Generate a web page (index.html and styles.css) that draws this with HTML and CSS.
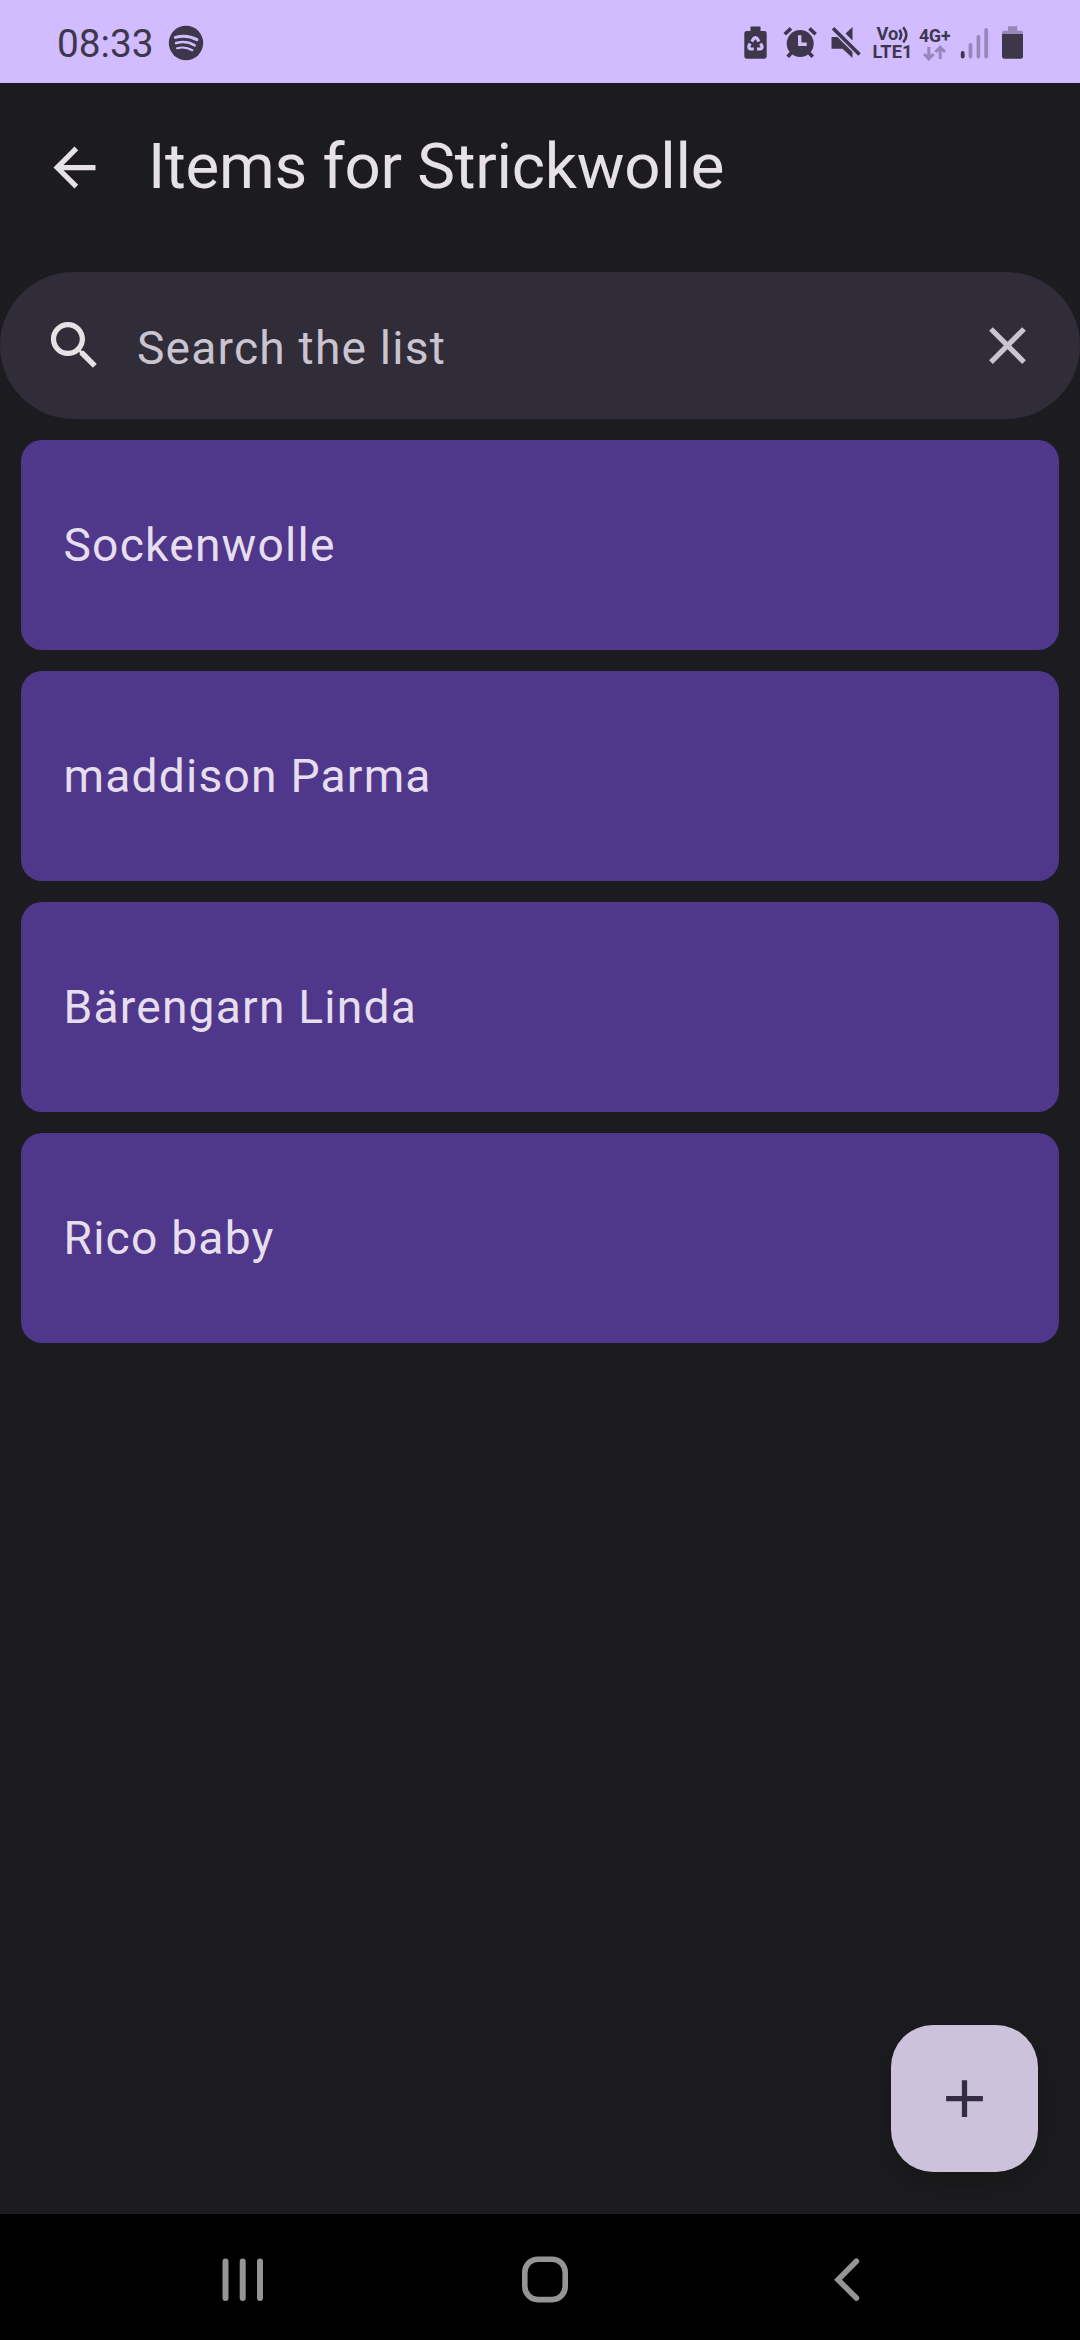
FILE: index.html
```html
<!DOCTYPE html>
<html lang="en">
<head>
<meta charset="utf-8">
<title>Items for Strickwolle</title>
<link rel="stylesheet" href="styles.css">
</head>
<body>
<div class="screen">
  <header class="status-bar">
    <div class="status-left">
      <span class="clock">08:33</span>
      <svg class="spotify" width="36" height="36" viewBox="0 0 36 36">
        <circle cx="18" cy="18" r="17.2" fill="#3e374c"/>
        <g fill="none" stroke="#d0bcff" stroke-linecap="round">
          <path d="M7.3 12.4c7.2-2.1 15.4-1.2 21.6 2.2" stroke-width="3"/>
          <path d="M8.2 18.1c6.4-1.9 13.2-1 18.5 2.2" stroke-width="2.6"/>
          <path d="M9.1 23.3c5.300-1.500 10.700-.8 15.200 1.900" stroke-width="2.2"/>
        </g>
      </svg>
    </div>
    <div class="status-right">
      <svg width="40" height="83" viewBox="738 0 40 83">
        <path d="M750.5 26.5h10v4.5h3.7a2.5 2.5 0 0 1 2.5 2.5v22.5a2.7 2.7 0 0 1-2.7 2.7h-17a2.7 2.7 0 0 1-2.7-2.7v-22.5a2.5 2.5 0 0 1 2.5-2.5h3.7z" fill="#3e374c"/>
        <g fill="none" stroke="#d0bcff" stroke-width="3.2" stroke-linejoin="round">
          <path d="M751.800 41.500l1.700-2.700q1.900-2.500 3.800 0l1.700 2.700"/>
          <path d="M760.600 43.600l1.200 2.200q.9 3-2.100 3.200h-2.700"/>
          <path d="M753.800 49h-2.700q-3-.2-2.100-3.200l1.200-2.200"/>
        </g>
      </svg>
      <svg width="46" height="83" viewBox="778 0 46 83" fill="none" stroke="#3e374c">
        <circle cx="800.2" cy="43.5" r="13.5" fill="#3e374c" stroke="none"/>
        <path d="M784.7 34.3l6.3-5.9M815.7 34.3l-6.3-5.9" stroke-width="3.6"/>
        <path d="M793 51l-5.300 5.700M807.400 51l5.300 5.700" stroke-width="3.6"/>
        <path d="M799.700 35.300v9h7" stroke="#d0bcff" stroke-width="3.4"/>
      </svg>
      <svg width="44" height="83" viewBox="824 0 44 83" fill="#3e374c">
        <path d="M852.500 27v13.500l-7-7zM832 37h8l12.500 12.500v8.500l-10-9.300h-10.500q-.5 0-.5-.5v-10.700q0-.5.5-.5z"/>
        <path d="M833.200 28.500l26 25.800" fill="none" stroke="#d0bcff" stroke-width="6"/>
        <path d="M833 28.300l26.500 26.200" fill="none" stroke="#3e374c" stroke-width="3.6"/>
      </svg>
      <svg class="net-text" width="48" height="83" viewBox="868 0 48 83" fill="#3e374c">
        <text x="876.500" y="40.300" textLength="21.800" lengthAdjust="spacingAndGlyphs">Vo</text>
        <path d="M899.300 29.800q3.700 5 0 10M903.200 27.200q6.300 7.600 0 15.200" fill="none" stroke="#3e374c" stroke-width="2.5"/>
        <text x="872.500" y="58.200" textLength="40" lengthAdjust="spacingAndGlyphs">LTE1</text>
      </svg>
      <svg class="net-text" width="40" height="83" viewBox="916 0 40 83" fill="#3e374c">
        <text x="919" y="41.500" textLength="31.700" lengthAdjust="spacingAndGlyphs">4G+</text>
        <path d="M928.800 47v11.500M924 54l4.800 4.800 4.800-4.800M940.200 59v-11.500M935.400 52l4.800-4.800 4.800 4.800" fill="none" stroke="#9787bb" stroke-width="3"/>
      </svg>
      <svg width="38" height="83" viewBox="956 0 38 83">
        <rect x="960.800" y="51" width="3.800" height="7.500" rx="1.900" fill="#3e374c"/>
        <g fill="#9787bb">
          <rect x="968.600" y="43" width="3.800" height="15.500" rx="1.900"/>
          <rect x="976.500" y="35" width="3.800" height="23.500" rx="1.900"/>
          <rect x="984.300" y="28" width="3.800" height="30.500" rx="1.900"/>
        </g>
      </svg>
      <svg width="36" height="83" viewBox="994 0 36 83">
        <path d="M1008 26.200h9.300v4.600h3.700a2 2 0 0 1 2 2v1.200h-21v-1.200a2 2 0 0 1 2-2h4z" fill="#9787bb"/>
        <path d="M1002 34h21v22.500a2.300 2.300 0 0 1-2.300 2.300h-16.400a2.300 2.300 0 0 1-2.300-2.300z" fill="#3e374c"/>
      </svg>
    </div>
  </header>

  <div class="app-bar">
    <svg class="icon" viewBox="0 0 24 24"><path d="M20 11H7.830l5.590-5.590L12 4l-8 8 8 8 1.410-1.410L7.830 13H20v-2z"/></svg>
    <h1 class="title">Items for Strickwolle</h1>
  </div>

  <main class="content">
    <div class="search">
      <svg class="icon" viewBox="0 0 24 24"><path d="M15.500 14h-.79l-.28-.27C15.410 12.590 16 11.110 16 9.500 16 5.910 13.090 3 9.500 3S3 5.910 3 9.500 5.910 16 9.500 16c1.610 0 3.090-.59 4.230-1.570l.27.28v.79l5 4.990L20.490 19l-4.990-5zm-6 0C7.010 14 5 11.990 5 9.500S7.010 5 9.500 5 14 7.010 14 9.500 11.990 14 9.500 14z"/></svg>
      <span class="placeholder">Search the list</span>
      <svg class="icon icon-clear" viewBox="0 0 24 24"><path d="M19 6.410L17.590 5 12 10.590 6.410 5 5 6.410 10.590 12 5 17.590 6.410 19 12 13.410 17.590 19 19 17.590 13.410 12z"/></svg>
    </div>
    <ul class="list">
      <li class="card">Sockenwolle</li>
      <li class="card">maddison Parma</li>
      <li class="card">Bärengarn Linda</li>
      <li class="card">Rico baby</li>
    </ul>
    <button class="fab" aria-label="Add">
      <svg class="icon icon-add" viewBox="0 0 24 24"><path d="M19 13h-6v6h-2v-6H5v-2h6V5h2v6h6v2z"/></svg>
    </button>
  </main>

  <nav class="nav-bar">
    <svg width="46" height="50" viewBox="0 0 46 50" fill="none" stroke="#959595" stroke-width="6" stroke-linecap="round">
      <path d="M5.500 7.500v36.500M22.700 7.500v36.500M40 7.500v36.500"/>
    </svg>
    <svg width="50" height="50" viewBox="0 0 50 50" fill="none" stroke="#959595" stroke-width="5.6">
      <rect x="4.800" y="5.200" width="40.400" height="40.400" rx="13"/>
    </svg>
    <svg width="46" height="50" viewBox="0 0 46 50" fill="none" stroke="#959595" stroke-width="5.6" stroke-linecap="round">
      <path d="M33.400 7.300L15 25.700l18.400 18.400"/>
    </svg>
  </nav>
</div>
</body>
</html>
```

FILE: styles.css
```css
* {
  box-sizing: border-box;
}

body {
  margin: 0;
  font-family: Roboto, "Noto Sans", sans-serif;
  background: #1c1b1f;
}

.screen {
  display: flex;
  flex-direction: column;
  width: 1080px;
  height: 2340px;
  overflow: hidden;
  color: #e6e1e5;
}

.status-bar {
  display: flex;
  justify-content: space-between;
  height: 83px;
  padding: 0 50px 0 57px;
  background: #d0bcff;
}

.status-left {
  display: flex;
  align-items: center;
  gap: 14px;
  color: #3e374c;
}

.clock {
  font-size: 38.8px;
  line-height: 46px;
  padding-top: 5px;
}

.spotify {
  margin-top: 2px;
}

.status-right {
  display: flex;
}

.net-text {
  font-size: 18px;
  font-weight: 700;
}

.app-bar {
  display: flex;
  align-items: center;
  gap: 42px;
  height: 168px;
  padding-left: 43px;
}

.title {
  margin: 0;
  font-size: 63.5px;
  font-weight: 400;
  line-height: 74px;
  letter-spacing: -0.22px;
}

.icon {
  flex: none;
  width: 63px;
  height: 63px;
  fill: #e6e1e5;
}

.content {
  position: relative;
  flex: 1;
  padding-top: 21px;
}

.search {
  display: flex;
  align-items: center;
  height: 147px;
  padding: 0 41px 0 43px;
  border-radius: 74px;
  background: #302d38;
}

.placeholder {
  flex: 1;
  padding: 5px 0 0 31px;
  font-size: 46.2px;
  letter-spacing: 1.18px;
  line-height: 56px;
  color: #cac4d0;
}

.icon-clear {
  fill: #cac4d0;
}

.list {
  display: flex;
  flex-direction: column;
  gap: 21px;
  margin: 0;
  padding: 21px;
  list-style: none;
}

.card {
  display: flex;
  align-items: center;
  height: 210px;
  padding-left: 42.5px;
  border-radius: 21px;
  background: #4f378b;
  color: #e6deed;
  font-size: 46.2px;
  letter-spacing: 1.2px;
}

.fab {
  position: absolute;
  right: 42px;
  bottom: 42px;
  display: flex;
  align-items: center;
  justify-content: center;
  width: 147px;
  height: 147px;
  padding: 0;
  border: 0;
  border-radius: 42px;
  background: #ccc2dc;
  box-shadow: 0 10px 18px 2px rgba(20, 22, 18, 0.55);
}

.icon-add {
  fill: #332d41;
}

.nav-bar {
  display: flex;
  justify-content: space-between;
  height: 126px;
  padding: 40px 211px 0 220px;
  background: #000;
}
```
